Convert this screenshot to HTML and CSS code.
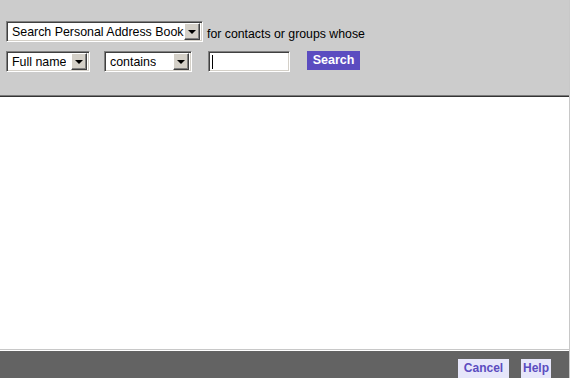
FILE: index.html
```html
<!DOCTYPE html>
<html lang="en">

<head>
  <meta charset="UTF-8">
  <meta name="viewport" content="width=device-width, initial-scale=1.0">
  <link rel="stylesheet" href="styles.css">
  <title>Search Address Book</title>
</head>

<body>
  <div class="page">
    <div class="header">
      <div class="row">
        <div class="dropdown book">
          <span class="value">Search Personal Address Book</span>
          <span class="arrow"></span>
        </div>
        <span class="label">for contacts or groups whose</span>
      </div>
      <div class="row second">
        <div class="dropdown field">
          <span class="value">Full name</span>
          <span class="arrow"></span>
        </div>
        <div class="dropdown match">
          <span class="value">contains</span>
          <span class="arrow"></span>
        </div>
        <div class="textbox"><span class="caret"></span></div>
        <div class="search">Search</div>
      </div>
    </div>
    <div class="results"></div>
    <div class="footer">
      <span class="btn cancel">Cancel</span>
      <span class="btn help">Help</span>
    </div>
  </div>
</body>

</html>
```

FILE: styles.css
```css
html, body {
  margin: 0;
  padding: 0;
  overflow: hidden;
}

body {
  background: #fff;
  font-family: "Liberation Sans", Arial, sans-serif;
}

.page {
  width: 569px;
  height: 378px;
  border-right: 1px solid #c8c8c8;
  display: flex;
  flex-direction: column;
}

.header {
  height: 96px;
  box-sizing: border-box;
  background: #cccccc;
  padding: 21px 0 0 6px;
  border-bottom: 1px solid #7a7a7a;
}

.row {
  display: flex;
  align-items: center;
}

.row.second {
  margin-top: 9px;
}

.label {
  font-size: 12.3px;
  color: #000;
  margin-left: 4px;
  padding-top: 5px;
}

.dropdown {
  height: 21px;
  box-sizing: border-box;
  background: #fff;
  border-top: 1px solid #808080;
  border-left: 1px solid #808080;
  border-bottom: 1px solid #fff;
  border-right: 1px solid #fff;
  box-shadow: inset 1px 1px 0 #404040, inset -1px -1px 0 #d4d0c8;
  display: flex;
  align-items: center;
  justify-content: space-between;
  padding: 2px;
  font-size: 12.4px;
}

.dropdown .value {
  padding-left: 3px;
  padding-top: 1px;
  white-space: nowrap;
  overflow: hidden;
}

.book {
  width: 197px;
}

.field {
  width: 84px;
}

.match {
  width: 88px;
  margin-left: 14px;
}

.arrow {
  flex-shrink: 0;
  width: 16px;
  height: 17px;
  box-sizing: border-box;
  background: #d4d0c8;
  border-top: 1px solid #fff;
  border-left: 1px solid #fff;
  border-right: 1px solid #404040;
  border-bottom: 1px solid #404040;
  box-shadow: inset -1px -1px 0 #808080;
  position: relative;
}

.arrow::after {
  content: "";
  position: absolute;
  left: 3px;
  top: 6px;
  border-left: 4px solid transparent;
  border-right: 4px solid transparent;
  border-top: 4px solid #000;
}

.textbox {
  width: 82px;
  height: 21px;
  box-sizing: border-box;
  margin-left: 16px;
  background: #fff;
  border-top: 1px solid #808080;
  border-left: 1px solid #808080;
  border-bottom: 1px solid #fff;
  border-right: 1px solid #fff;
  box-shadow: inset 1px 1px 0 #404040, inset -1px -1px 0 #d4d0c8;
  padding: 3px 0 0 3px;
}

.caret {
  display: block;
  width: 1px;
  height: 14px;
  background: #000;
}

.search {
  margin-left: 17px;
  width: 53px;
  height: 19px;
  line-height: 19px;
  align-self: flex-start;
  text-align: center;
  background: #5b4cc0;
  color: #fff;
  font-size: 12.5px;
  font-weight: bold;
}

.results {
  height: 252px;
  border-top: 1px solid #333;
  border-bottom: 1px solid #c8c8c8;
  margin-bottom: 1px;
  background: #fff;
}

.footer {
  flex: 1;
  background: #636363;
  display: flex;
  justify-content: flex-end;
  align-items: flex-start;
  padding: 8px 18px 0 0;
  overflow: hidden;
}

.btn {
  display: block;
  height: 22px;
  line-height: 18px;
  text-align: center;
  background: #e6e6fa;
  color: #5b4cc0;
  font-size: 12px;
  font-weight: bold;
}

.cancel {
  width: 51px;
}

.help {
  width: 30px;
  margin-left: 12px;
}
```
